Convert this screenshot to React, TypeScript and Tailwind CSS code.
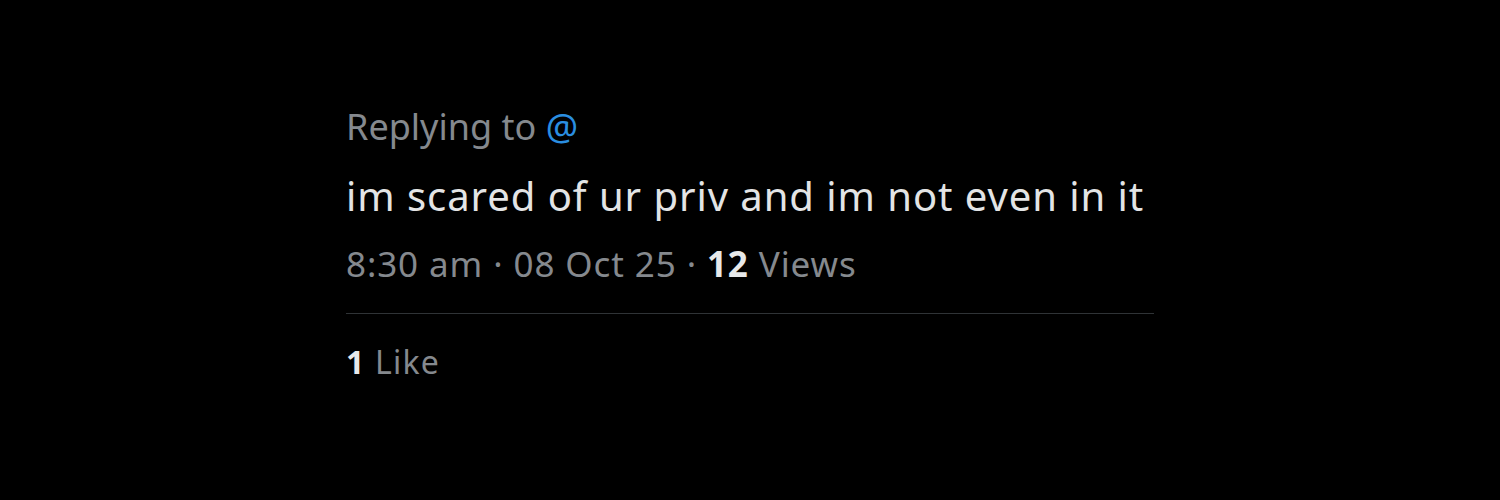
export default function App() {
  return (
    <div
      className="flex h-[500px] w-[1500px] bg-black pl-[346px] pt-[105px]"
      style={{ fontFamily: '"Noto Sans", "Liberation Sans", sans-serif' }}
    >
      <div className="flex w-[808px] flex-col">
        <div className="text-[36px] leading-[44px] text-[#85898e]">
          Replying to <span className="text-[#2a8ee0]">@</span>
        </div>
        <div className="mt-[22px] text-[40px] leading-[50px] tracking-[0.95px] text-[#e3e4e5]">
          im scared of ur priv and im not even in it
        </div>
        <div className="mt-[21px] text-[35px] leading-[44px] tracking-[0.9px] text-[#85898e]">
          8:30 am · 08 Oct 25 · <span className="font-bold text-[#e7e9ea]">12</span> Views
        </div>
        <div className="mt-[27px] h-px w-full bg-[#2f3336]" />
        <div className="mt-[26px] text-[32px] leading-[44px] tracking-[1.2px] text-[#85898e]">
          <span className="font-bold text-[#e7e9ea]">1</span> Like
        </div>
      </div>
    </div>
  );
}
